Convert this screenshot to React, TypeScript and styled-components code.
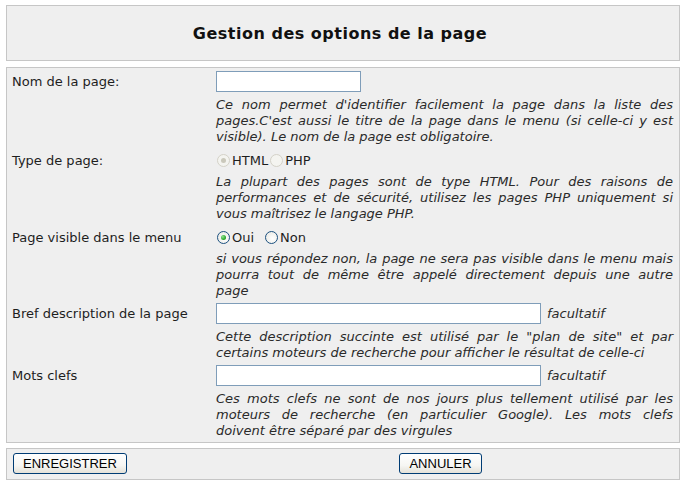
import React from "react";
import styled, { createGlobalStyle } from "styled-components";

const GlobalStyle = createGlobalStyle`
  html, body {
    margin: 0;
    padding: 0;
    background: #ffffff;
  }
  body {
    font-family: "DejaVu Sans", Verdana, sans-serif;
    color: #1e1e1e;
  }
`;

const Page = styled.div`
  width: 674px;
  padding: 5px 6px;
  display: flex;
  flex-direction: column;
`;

const Panel = styled.div`
  box-sizing: border-box;
  background: #efefef;
  border: 1px solid #c6c6c6;
`;

const HeaderBox = styled(Panel)`
  height: 56px;
  display: flex;
  align-items: center;
  justify-content: center;
`;

const Title = styled.h1`
  margin: 0 0 0 -6px;
  font-size: 16px;
  font-weight: bold;
  letter-spacing: 0.5px;
  color: #111111;
`;

const FormBox = styled(Panel)`
  margin-top: 6px;
  padding: 3px 6px 3px 5px;
  display: flex;
  flex-direction: column;
  gap: 4px;
`;

const Field = styled.div<{ $choice?: boolean }>`
  display: grid;
  grid-template-columns: 204px 1fr;
  row-gap: ${(p) => (p.$choice ? 2 : 5)}px;
`;

const Label = styled.div`
  grid-column: 1;
  align-self: center;
  font-size: 13px;
  color: #1e1e1e;
`;

const Control = styled.div<{ $choice?: boolean }>`
  grid-column: 2;
  height: ${(p) => (p.$choice ? 23 : 21)}px;
  display: flex;
  align-items: center;
`;

const Description = styled.div`
  grid-column: 2;
  font-size: 13px;
  font-style: italic;
  line-height: 16px;
  color: #2a2a2a;
`;

const Line = styled.span<{ $last?: boolean }>`
  display: block;
  white-space: nowrap;
  text-align: justify;
  text-align-last: ${(p) => (p.$last ? "left" : "justify")};
`;

const TextInput = styled.input<{ $w: number }>`
  box-sizing: border-box;
  width: ${(p) => p.$w}px;
  height: 21px;
  margin: 0;
  padding: 1px 3px;
  border: 1px solid #7f9db9;
  background: #ffffff;
  font-family: "DejaVu Sans", sans-serif;
  font-size: 12px;
  outline: none;
`;

const Hint = styled.span`
  margin-left: 6px;
  font-size: 13px;
  font-style: italic;
  color: #2a2a2a;
`;

const RadioOption = styled.label<{ $space: number }>`
  display: inline-flex;
  align-items: center;
  margin-right: ${(p) => p.$space}px;
  font-size: 13px;
  color: #1e1e1e;
`;

const Radio = styled.input`
  appearance: none;
  -webkit-appearance: none;
  box-sizing: border-box;
  width: 13px;
  height: 13px;
  margin: 0 2px 0 1px;
  border-radius: 50%;
  border: 1px solid #1c5180;
  background: radial-gradient(circle at 60% 60%, #ffffff 0%, #e6e6e0 100%);
  position: relative;

  &:checked::after {
    content: "";
    position: absolute;
    left: 3px;
    top: 3px;
    width: 5px;
    height: 5px;
    border-radius: 50%;
    background: radial-gradient(circle at 35% 35%, #8fe38f 0%, #21a121 70%, #1b8a1b 100%);
  }

  &:disabled {
    border-color: #d4d2c8;
    background: #f4f4f0;
  }

  &:disabled:checked::after {
    background: #cac8bb;
  }
`;

const ButtonBar = styled(Panel)`
  margin-top: 5px;
  padding: 4px 6px 5px 6px;
  display: grid;
  grid-template-columns: 195px 1fr;
  align-items: center;
`;

const ButtonCell = styled.div<{ $align: "start" | "center" }>`
  display: flex;
  justify-content: ${(p) => p.$align};
`;

const Button = styled.button`
  box-sizing: border-box;
  height: 21px;
  margin: 0;
  padding: 0 9px;
  border: 1px solid #003c74;
  border-radius: 3px;
  background: linear-gradient(#ffffff 0%, #f6f6f3 60%, #e4e1d8 100%);
  font-family: "Liberation Sans", Arial, sans-serif;
  font-size: 13px;
  color: #000000;
  cursor: pointer;
`;

const Lines: React.FC<{ lines: string[] }> = ({ lines }) => (
  <Description>
    {lines.map((l, i) => (
      <Line key={i} $last={i === lines.length - 1}>
        {l}
      </Line>
    ))}
  </Description>
);

export default function App() {
  return (
    <>
      <GlobalStyle />
      <Page>
        <HeaderBox>
          <Title>Gestion des options de la page</Title>
        </HeaderBox>

        <FormBox>
          <Field>
            <Label>Nom de la page:</Label>
            <Control>
              <TextInput type="text" $w={145} />
            </Control>
            <Lines
              lines={[
                "Ce nom permet d'identifier facilement la page dans la liste des",
                "pages.C'est aussi le titre de la page dans le menu (si celle-ci y est",
                "visible). Le nom de la page est obligatoire.",
              ]}
            />
          </Field>

          <Field $choice>
            <Label>Type de page:</Label>
            <Control $choice>
              <RadioOption $space={1}>
                <Radio type="radio" name="type" disabled defaultChecked />
                HTML
              </RadioOption>
              <RadioOption $space={0}>
                <Radio type="radio" name="type" disabled />
                PHP
              </RadioOption>
            </Control>
            <Lines
              lines={[
                "La plupart des pages sont de type HTML. Pour des raisons de",
                "performances et de sécurité, utilisez les pages PHP uniquement si",
                "vous maîtrisez le langage PHP.",
              ]}
            />
          </Field>

          <Field $choice>
            <Label>Page visible dans le menu</Label>
            <Control $choice>
              <RadioOption $space={10}>
                <Radio type="radio" name="visible" defaultChecked />
                Oui
              </RadioOption>
              <RadioOption $space={0}>
                <Radio type="radio" name="visible" />
                Non
              </RadioOption>
            </Control>
            <Lines
              lines={[
                "si vous répondez non, la page ne sera pas visible dans le menu mais",
                "pourra tout de même être appelé directement depuis une autre",
                "page",
              ]}
            />
          </Field>

          <Field>
            <Label>Bref description de la page</Label>
            <Control>
              <TextInput type="text" $w={325} />
              <Hint>facultatif</Hint>
            </Control>
            <Lines
              lines={[
                'Cette description succinte est utilisé par le "plan de site" et par',
                "certains moteurs de recherche pour afficher le résultat de celle-ci",
              ]}
            />
          </Field>

          <Field>
            <Label>Mots clefs</Label>
            <Control>
              <TextInput type="text" $w={325} />
              <Hint>facultatif</Hint>
            </Control>
            <Lines
              lines={[
                "Ces mots clefs ne sont de nos jours plus tellement utilisé par les",
                "moteurs de recherche (en particulier Google). Les mots clefs",
                "doivent être séparé par des virgules",
              ]}
            />
          </Field>
        </FormBox>

        <ButtonBar>
          <ButtonCell $align="start">
            <Button type="button">ENREGISTRER</Button>
          </ButtonCell>
          <ButtonCell $align="center">
            <Button type="button">ANNULER</Button>
          </ButtonCell>
        </ButtonBar>
      </Page>
    </>
  );
}
